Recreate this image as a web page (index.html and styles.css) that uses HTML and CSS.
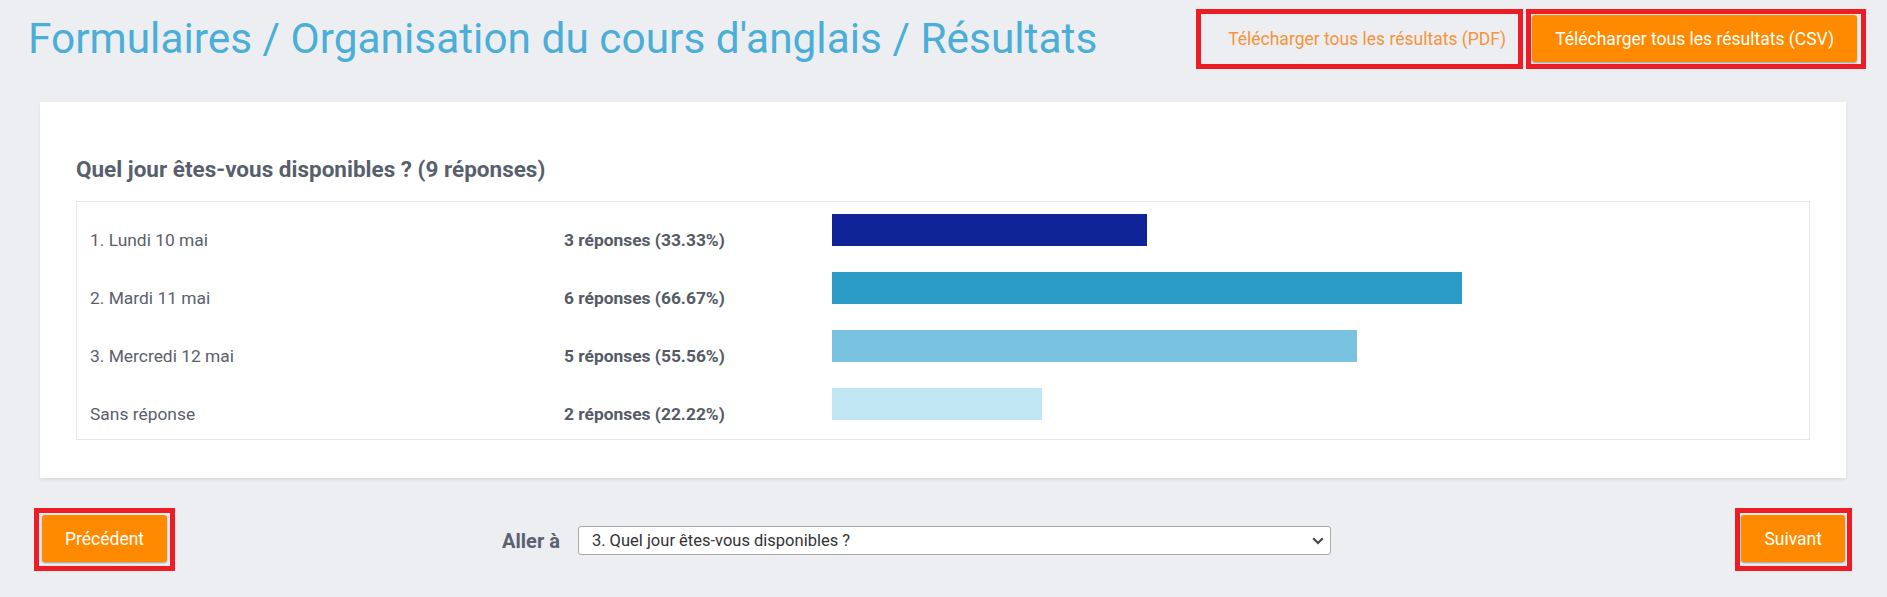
FILE: index.html
```html
<!DOCTYPE html>
<html lang="fr">
<head>
<meta charset="utf-8">
<title>Résultats</title>
<link rel="stylesheet" href="styles.css">
</head>
<body>
<header class="topbar">
  <h1 class="title">Formulaires / Organisation du cours d'anglais / Résultats</h1>
  <div class="actions">
    <span class="hl hl-pdf"><a class="btn-link">Télécharger tous les résultats (PDF)</a></span>
    <span class="hl hl-csv"><a class="btn">Télécharger tous les résultats (CSV)</a></span>
  </div>
</header>

<main class="card">
  <h2 class="question">Quel jour êtes-vous disponibles ? (9 réponses)</h2>
  <div class="results">
    <div class="row">
      <div class="label">1. Lundi 10 mai</div>
      <div class="count">3 réponses (33.33%)</div>
      <div class="track"><div class="bar c1" style="width:33.33%"></div></div>
    </div>
    <div class="row">
      <div class="label">2. Mardi 11 mai</div>
      <div class="count">6 réponses (66.67%)</div>
      <div class="track"><div class="bar c2" style="width:66.67%"></div></div>
    </div>
    <div class="row">
      <div class="label">3. Mercredi 12 mai</div>
      <div class="count">5 réponses (55.56%)</div>
      <div class="track"><div class="bar c3" style="width:55.56%"></div></div>
    </div>
    <div class="row">
      <div class="label">Sans réponse</div>
      <div class="count">2 réponses (22.22%)</div>
      <div class="track"><div class="bar c4" style="width:22.22%"></div></div>
    </div>
  </div>
</main>

<nav class="pager">
  <span class="hl hl-prev"><a class="btn">Précédent</a></span>
  <div class="goto">
    <span class="goto-label">Aller à</span>
    <div class="select-wrap">
      <select class="select">
        <option>3. Quel jour êtes-vous disponibles ?</option>
      </select>
      <svg class="chev" width="12" height="8" viewBox="0 0 12 8"><path d="M1.2 1.2 L6 6 L10.8 1.2" fill="none" stroke="#444" stroke-width="2"/></svg>
    </div>
  </div>
  <span class="hl hl-next"><a class="btn">Suivant</a></span>
</nav>
</body>
</html>
```

FILE: styles.css
```css
* { box-sizing: border-box; }
html, body { margin: 0; padding: 0; }
body {
  background: #edeef2;
  font-family: Roboto, "Liberation Sans", Arial, sans-serif;
  color: #555b66;
  width: 1887px;
  height: 597px;
  overflow: hidden;
}

.topbar {
  display: flex;
  justify-content: space-between;
  align-items: flex-start;
  padding: 9px 21px 0 28px;
  height: 102px;
}
.title {
  margin: 5px 0 0;
  font-size: 42.4px;
  line-height: 50px;
  font-weight: 400;
  color: #4aaed8;
  letter-spacing: 0;
}
.actions { display: flex; gap: 3px; }

.hl {
  display: inline-flex;
  border: 5px solid #ee1c25;
}
.hl-pdf { padding: 0; }
.hl-csv { padding: 1px 4px 2px 1px; }
.hl-prev { padding: 2px 3px 4px 3px; }
.hl-next { padding: 2px 2px 4px 1px; }

.btn, .btn-link {
  display: inline-flex;
  align-items: center;
  justify-content: center;
  height: 47px;
  padding: 0 23px;
  font-size: 17.5px;
  border-radius: 3px;
  text-decoration: none;
  white-space: nowrap;
}
.btn {
  background: #ff8a00;
  color: #ffffff;
  box-shadow: 0 1px 2px rgba(0, 0, 0, 0.35);
}
.btn-link {
  height: 50px;
  width: 317px;
  padding: 0 10px 0 27px;
  color: #f7933a;
  background: transparent;
  justify-content: flex-start;
}

.card {
  margin: 0 41px 0 40px;
  height: 376px;
  background: #ffffff;
  padding: 54px 36px 0;
  box-shadow: 0 2px 3px rgba(0, 0, 0, 0.08);
}
.question {
  margin: 0 0 19px;
  font-size: 22.5px;
  line-height: 26px;
  font-weight: 700;
  color: #575f6d;
}
.results {
  border: 1px solid #e5e6e9;
  padding: 12px 0 5px 13px;
  display: flex;
  flex-direction: column;
  gap: 12px;
}
.row {
  display: grid;
  grid-template-columns: 474px 268px 945px;
  height: 46px;
  align-items: start;
}
.label, .count {
  padding-top: 16px;
  font-size: 17.4px;
  line-height: 20px;
  white-space: nowrap;
}
.label { color: #5a606b; }
.count { font-weight: 700; color: #555b66; }
.track { width: 945px; }
.bar { height: 32px; }
.c1 { background: #0f2597; }
.c2 { background: #2b9bc8; }
.c3 { background: #79c3e1; }
.c4 { background: #c0e5f3; }

.pager {
  display: flex;
  align-items: flex-start;
  padding: 30px 35px 0 34px;
}
.goto {
  display: flex;
  align-items: center;
  margin-left: 327px;
  margin-top: 18px;
  gap: 18px;
}
.goto-label {
  font-size: 20px;
  font-weight: 700;
  color: #5b6170;
}
.select-wrap { position: relative; }
.select {
  appearance: none;
  -webkit-appearance: none;
  width: 753px;
  height: 29px;
  border: 1px solid #a9a9a9;
  border-radius: 3px;
  background: #ffffff;
  font-family: Roboto, "Liberation Sans", Arial, sans-serif;
  font-size: 16.5px;
  color: #333333;
  padding: 0 30px 0 13px;
  margin: 0;
}
.chev {
  position: absolute;
  right: 7px;
  top: 11px;
  pointer-events: none;
}
.hl-next { margin-left: auto; }
```
